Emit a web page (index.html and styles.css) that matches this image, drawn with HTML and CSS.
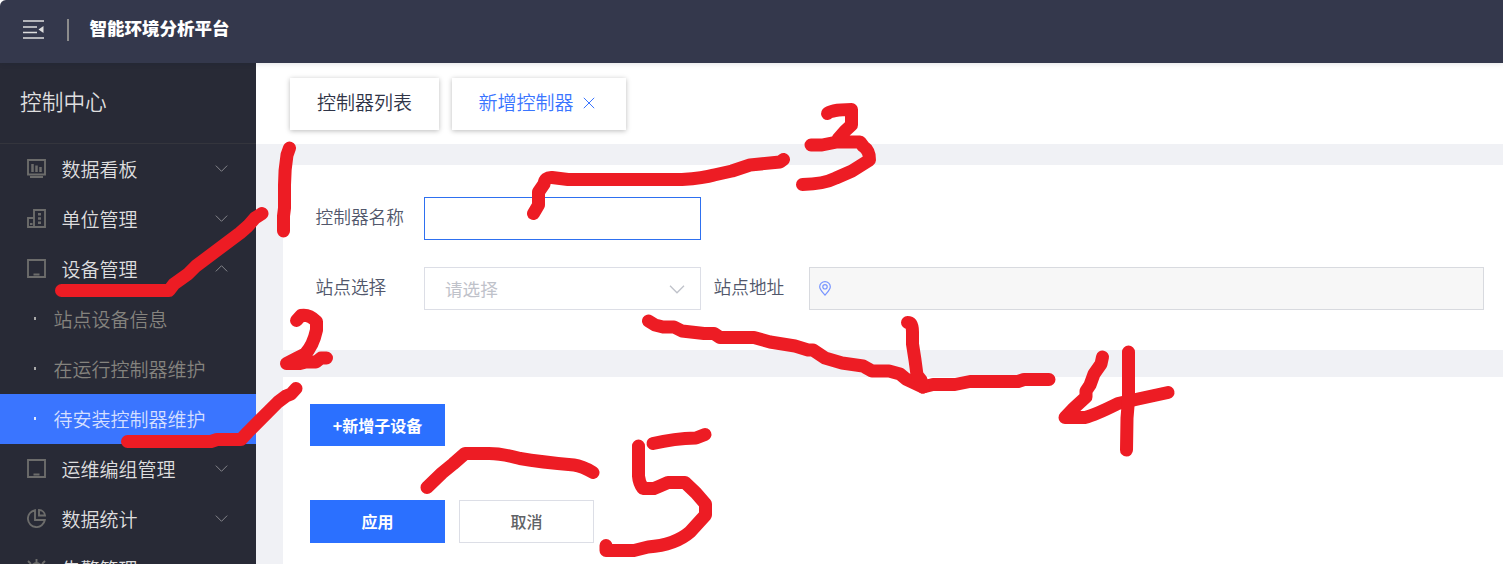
FILE: index.html
```html
<!DOCTYPE html>
<html lang="zh-CN">
<head>
<meta charset="utf-8">
<title>智能环境分析平台</title>
<link rel="stylesheet" href="styles.css">
</head>
<body>
<div class="app">
  <header class="header">
    <svg class="fold" viewBox="0 0 21 20"><path d="M0 2H21M0 8H14M0 13.500H14M0 19H21" stroke="currentColor" stroke-width="1.700"/><path d="M20.500 7V14L15.500 10.500Z" fill="currentColor"/></svg>
    <span class="divider"></span>
    <h1 class="brand">智能环境分析平台</h1>
  </header>
  <div class="body">
    <aside class="sidebar">
      <div class="side-title">控制中心</div>
      <nav class="menu">
        <div class="item"><svg class="ico" viewBox="0 0 19 19"><path d="M1 1H18V15.500H1ZM3 18H16"/><path class="bars" d="M5.500 13V5M9.500 13V6.500M13.500 13V8"/></svg><span class="name">数据看板</span><svg class="arrow" viewBox="0 0 12 7"><path d="M.3.600L6 6.300 11.700.6"/></svg></div>
        <div class="item"><svg class="ico" viewBox="0 0 19 19"><path d="M7 18V1H18V18H1V9H7V18"/><path d="M12.500 4V15" stroke-width="3" stroke-dasharray="2.500 1.700"/><path d="M3 15H5.500"/></svg><span class="name">单位管理</span><svg class="arrow" viewBox="0 0 12 7"><path d="M.3.600L6 6.300 11.700.6"/></svg></div>
        <div class="item"><svg class="ico" viewBox="0 0 19 19"><path d="M1 1H18V18H1ZM6.500 15.500H12.500"/></svg><span class="name">设备管理</span><svg class="arrow" viewBox="0 0 12 7"><path d="M.3 6.400L6 .7 11.700 6.400"/></svg></div>
        <div class="sub"><i class="dot"></i><span>站点设备信息</span></div>
        <div class="sub"><i class="dot"></i><span>在运行控制器维护</span></div>
        <div class="sub active"><i class="dot"></i><span>待安装控制器维护</span></div>
        <div class="item"><svg class="ico" viewBox="0 0 19 19"><path d="M1 1H18V18H1ZM6.500 15.500H12.500"/></svg><span class="name">运维编组管理</span><svg class="arrow" viewBox="0 0 12 7"><path d="M.3.600L6 6.300 11.700.6"/></svg></div>
        <div class="item"><svg class="ico" viewBox="0 0 19 19"><path d="M8 1.200A8.500 8.500 0 1 0 17.800 11H8ZM12 1A6 6 0 0 1 18 6.500H12Z"/></svg><span class="name">数据统计</span><svg class="arrow" viewBox="0 0 12 7"><path d="M.3.600L6 6.300 11.700.6"/></svg></div>
        <div class="item"><svg class="ico" viewBox="0 0 19 19"><path d="M9.500 0V4M1 2L4 5M18 2L15 5M4.500 17V9A5 5 0 0 1 14.500 9V17M2 18H17"/></svg><span class="name">告警管理</span></div>
      </nav>
    </aside>
    <main class="main">
      <div class="tabs">
        <div class="tab">控制器列表</div>
        <div class="tab current">新增控制器<svg class="close" viewBox="0 0 12 12"><path d="M.8.800L11.200 11.200M11.200.8L.8 11.200"/></svg></div>
      </div>
      <section class="panel form">
        <div class="row">
          <label class="label">控制器名称</label>
          <input class="field focused" type="text">
        </div>
        <div class="row">
          <label class="label">站点选择</label>
          <div class="field select"><span>请选择</span><svg class="caret" viewBox="0 0 16 9"><path d="M1 .8L8 7.800 15 .8"/></svg></div>
          <label class="label second">站点地址</label>
          <div class="field address"><svg class="pin" viewBox="0 0 12 15"><path d="M6 14C3 10.500.7 8.500.7 5.700A5.300 5.100 0 0 1 11.300 5.700C11.300 8.500 9 10.500 6 14Z"/><circle cx="6" cy="5.800" r="2.200"/></svg></div>
        </div>
      </section>
      <section class="panel actions">
        <button class="btn primary">+新增子设备</button>
        <div class="btn-row">
          <button class="btn primary tall">应用</button>
          <button class="btn tall">取消</button>
        </div>
      </section>
    </main>
  </div>
  <svg class="marks" viewBox="0 0 1503 564">
    <path d="M61.500 290.500H169L174 284 188 274 196 266 240 233 248 226 255 218 262 213.500"/>
    <path d="M289.500 148L287 155Q284.500 170 284.500 185V208L283.500 216V231"/>
    <path d="M296.500 320.500L301 315.500Q309 314 316.500 321.500V330Q313 346 305 354L297 358 286.500 363.500H300L306 362H316L321 358H326.500"/>
    <path d="M127.500 441.500H211L217 439.500H241L248 432 278 402 286 396 291 394 296 388.500"/>
    <path d="M533.500 213.500L538.500 205V192L544 184Q545 177 552 177.500L568 179.500H682Q704 178 714 175L732 171 750 165 780 162 783.500 159.500"/>
    <path d="M827.500 113.500Q831 109.500 851.500 109.500V125L845 131 838 139M811 145H822L837 142H860L863 146Q870 151 869.500 160L852 171 836 178Q824 184 802.500 184.500"/>
    <path d="M648.500 321L655 325 663 327H674L682 331 704 333.500H714L720 337.500H754L770 342 795 346 808 350H813L825 358 842 363 863 366 872 371H889L900 374 906 379 923 387 933 384.500H955L970 381.500H1018L1024 379.500H1049"/>
    <path d="M907.500 322.500Q912.500 322.500 912.500 332V344L915 360 917 375 921 380 923 387"/>
    <path d="M1102.500 357L1101 364 1094 374 1090 385 1086 391V397L1074 408 1065 417.500H1085Q1095 415 1118 403.500L1138 399 1168 392.500"/>
    <path d="M1128.500 352V400L1127 418 1126.500 450"/>
    <path d="M427 487.500L442 473 453 464 465 453.500H489Q502 453.500 520 458.500 540 462 574 465 582 466 593 472.500"/>
    <path d="M653 443.500Q674 438.500 696 438L705 434.500"/>
    <path d="M638.500 446V476Q639 483 643 488.500H654L660 486 668 482.500H685L696 493 705.500 504V515L690 532Q675 545 648 547L634 550.500H606V545.500"/>
  </svg>
</div>
</body>
</html>
```
FILE: styles.css
```css
* { box-sizing: border-box; }
body { margin: 0; background: #fff; font-family: "Noto Sans CJK SC", sans-serif; font-weight: 350; }
.app { position: relative; width: 1503px; height: 564px; overflow: hidden; border-top-left-radius: 6px; display: flex; flex-direction: column; }
.header { height: 63px; flex: none; background: #34384c; color: #ddd; display: flex; align-items: center; padding: 0 23px 5px; box-shadow: 0 1px 5px rgba(0, 21, 41, .12); z-index: 1; }
.fold { width: 21px; height: 20px; }
.divider { width: 2px; height: 22px; margin: 2px 21px 0 23px; background: #8c8c8c; }
.brand { margin: 0 0 3px -.5px; font-size: 17.500px; line-height: 26px; font-weight: 900; color: #fff; }
.body { display: flex; flex: 1; min-height: 0; }
.sidebar { width: 256px; flex: none; background: #282a36; color: #dededf; overflow: hidden; }
.side-title { height: 81px; padding-left: 20px; line-height: 76px; font-size: 21.700px; border-bottom: 1px solid #34353d; }
.item { display: flex; align-items: center; height: 50px; padding: 0 28px 0 27px; font-size: 19px; }
.ico { width: 19px; height: 19px; margin: 0 15.500px 1px 0; fill: none; stroke: #6c6c6b; stroke-width: 1.900; }
.bars { stroke-width: 2.500; }
.name { flex: 1; line-height: 50px; }
.arrow { width: 13px; height: 7px; margin-bottom: 2px; fill: none; stroke: #84858b; stroke-width: 1; }
.sub { display: flex; align-items: center; height: 50px; padding: 0 0 2px 34px; font-size: 19px; color: #85837e; }
.dot { width: 2px; height: 3px; margin-right: 17.500px; background: #aaa; }
.active { background: #3a75ff; color: #d4dfff; }
.active .dot { background: #e4ebff; }
.main { flex: 1; min-width: 0; background: #f0f1f5; display: flex; flex-direction: column; }
.tabs { height: 81px; flex: none; background: #fff; display: flex; gap: 13px; padding: 15px 34px 0; }
.tab { height: 52px; width: 149px; padding-left: 27px; line-height: 48px; font-size: 19px; color: #2f3447; background: #fff; box-shadow: 0 1px 5px rgba(0, 0, 0, .27); white-space: nowrap; }
.current { width: 174px; color: #3a75ff; padding-left: 26.500px; }
.close { width: 12px; height: 12px; margin: 0 0 1px 9.500px; fill: none; stroke: currentColor; }
.panel { background: #fff; margin-left: 27px; }
.form { height: 185px; flex: none; margin-top: 21px; padding: 32px 19px 0 32.500px; display: flex; flex-direction: column; gap: 27px; }
.row { display: flex; height: 43px; }
.label { width: 108.500px; font-size: 17.700px; line-height: 39px; color: #51576b; }
.second { width: 95.500px; margin-left: 12.500px; }
.field { width: 277px; height: 43px; border: 1px solid #dcdee6; background: #fff; }
.focused { border-color: #2e70f0; outline: none; }
.select { display: flex; align-items: center; justify-content: space-between; padding: 0 15px 0 20px; font-size: 17.600px; font-weight: 400; line-height: 41px; color: #bfc2ca; }
.caret { width: 16px; height: 9px; fill: none; stroke: #bfc2ca; stroke-width: 1.300; margin-top: 2px; }
.address { width: 675px; background: #f7f7f7; border-color: #d8dadf; display: flex; align-items: center; padding-left: 9px; }
.pin { width: 12px; height: 15px; fill: none; stroke: #7895ff; stroke-width: 1.200; }
.actions { flex: 1; margin-top: 27px; padding: 27px 27px 0; }
.btn { display: block; width: 135px; height: 42px; padding: 0; border: 1px solid #dcdee6; background: #fff; color: #606266; font: 500 16px/38px "Noto Sans CJK SC", sans-serif; }
.primary { background: #2b70ff; border-color: #2b70ff; color: #fff; font-weight: 700; }
.btn.tall { height: 43px; padding-bottom: 2px; }
.btn-row { display: flex; gap: 14px; margin-top: 54px; }
.marks { position: absolute; left: 0; top: 0; width: 1503px; height: 564px; z-index: 2; pointer-events: none; fill: none; stroke: #ed1c24; stroke-width: 13; stroke-linecap: round; stroke-linejoin: round; }
```
